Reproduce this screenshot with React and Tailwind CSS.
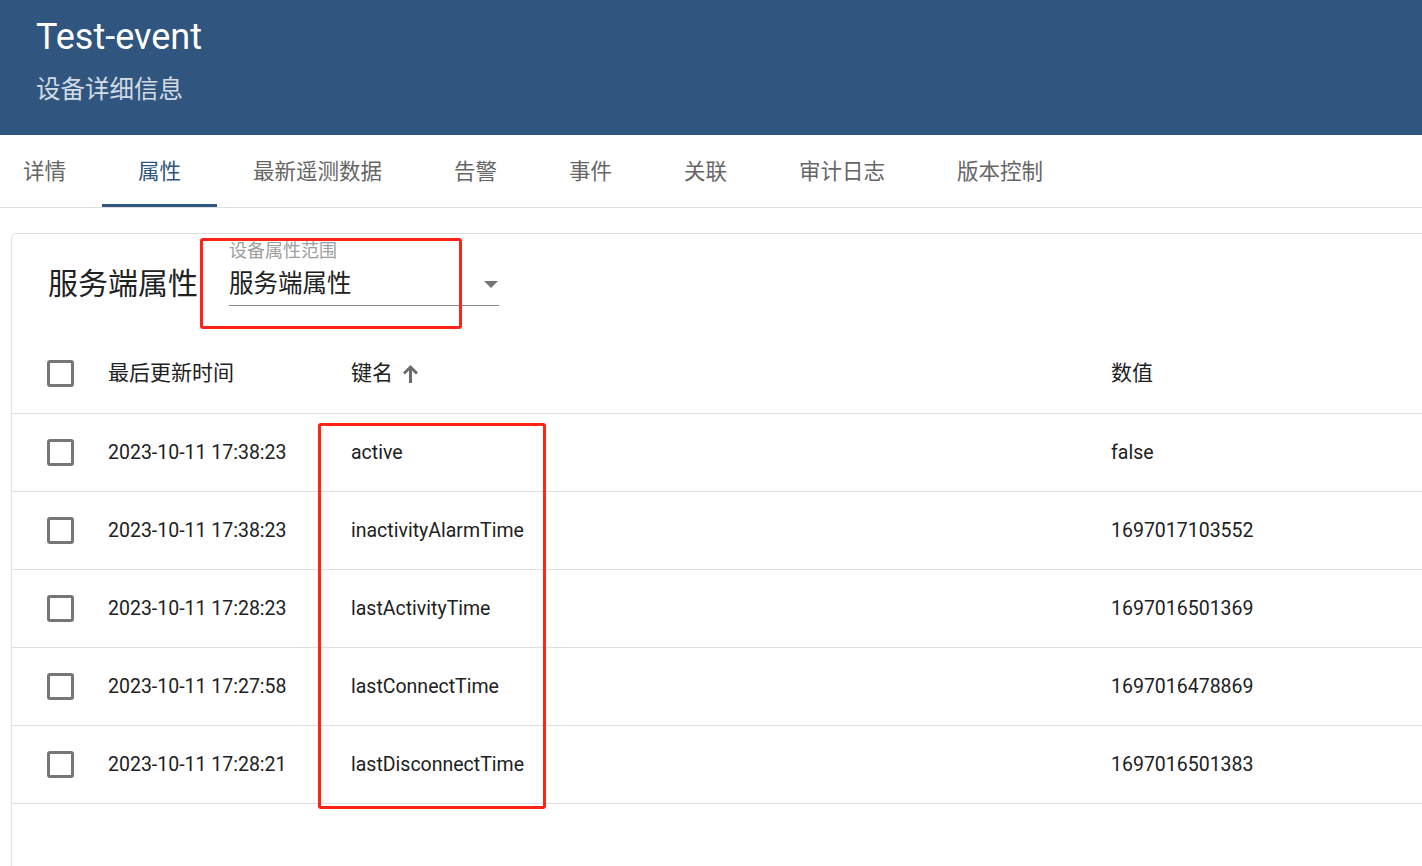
import { useState } from 'react';

const tabs = ['详情', '属性', '最新遥测数据', '告警', '事件', '关联', '审计日志', '版本控制'];

const rows = [
  { time: '2023-10-11 17:38:23', key: 'active', value: 'false' },
  { time: '2023-10-11 17:38:23', key: 'inactivityAlarmTime', value: '1697017103552' },
  { time: '2023-10-11 17:28:23', key: 'lastActivityTime', value: '1697016501369' },
  { time: '2023-10-11 17:27:58', key: 'lastConnectTime', value: '1697016478869' },
  { time: '2023-10-11 17:28:21', key: 'lastDisconnectTime', value: '1697016501383' },
];

function Checkbox() {
  return <div className="h-[27px] w-[27px] rounded-[3px] border-[3px] border-[#767676] bg-white" />;
}

function SortArrow() {
  return (
    <svg width="15" height="18" viewBox="0 0 15 18" className="ml-[10px] text-[#6b6b6b]">
      <path d="M7.5 0L15 7.5L13 9.5L9 5.5V18H6V5.5L2 9.5L0 7.5Z" fill="currentColor" />
    </svg>
  );
}

export default function App() {
  const [active, setActive] = useState(1);

  return (
    <div className="relative h-[866px] w-[1422px] overflow-hidden bg-white font-['Roboto','Noto_Sans_CJK_SC',sans-serif]">
      {/* page header */}
      <header className="h-[135px] bg-[#30557f] px-[36px]">
        <h1 className="pt-[17px] text-[36px] leading-[40px] text-white">Test-event</h1>
        <p className="mt-[17px] text-[24.5px] leading-[32px] text-[#d3dbe4]">设备详细信息</p>
      </header>

      {/* tabs */}
      <nav className="flex h-[73px] border-b border-[#e0e0e0] -ml-[13px]">
        {tabs.map((t, i) => (
          <button
            key={t}
            onClick={() => setActive(i)}
            className={
              'relative flex h-[72px] items-center px-[36px] pt-[3px] text-[21.5px] ' +
              (i === active ? 'text-[#30557f]' : 'text-[#666]')
            }
          >
            {t}
            {i === active && <span className="absolute bottom-0 left-0 h-[3px] w-full bg-[#30557f]" />}
          </button>
        ))}
      </nav>

      {/* card */}
      <section className="ml-[11px] -mr-4 mt-[25px] rounded-tl-[5px] border border-[#e0e0e0]">
        <div className="flex h-[100px] items-start pl-[36px]">
          <h2 className="mt-[32px] text-[30px] leading-[36px] text-[#212121]">服务端属性</h2>
          <div className="ml-[31px] w-[270px]">
            <div className="mt-[7px] text-[18px] leading-[20px] text-[#9e9e9e]">设备属性范围</div>
            <div className="mt-[8px] flex items-center justify-between border-b border-[#8a8a8a] pb-[6px]">
              <span className="text-[24.5px] leading-[30px] text-[#212121]">服务端属性</span>
              <span className="mr-[1px] h-0 w-0 border-x-[7px] border-t-[7px] border-x-transparent border-t-[#757575]" />
            </div>
          </div>
        </div>

        <div className="grid h-[80px] grid-cols-[61px_243px_760px_1fr] items-center border-b border-[#e0e0e0] pl-[35px] text-[21px] text-[#212121]">
          <Checkbox />
          <div>最后更新时间</div>
          <div className="flex items-center">
            键名
            <SortArrow />
          </div>
          <div>数值</div>
        </div>

        {rows.map((r) => (
          <div
            key={r.key}
            className="grid h-[78px] grid-cols-[61px_243px_760px_1fr] items-center border-b border-[#e0e0e0] pl-[35px] text-[19.5px] text-[#212121]"
          >
            <Checkbox />
            <div>{r.time}</div>
            <div>{r.key}</div>
            <div>{r.value}</div>
          </div>
        ))}
        <div className="h-[80px]" />
      </section>

      {/* annotation boxes */}
      <div className="absolute left-[200px] top-[238px] h-[91px] w-[262px] rounded-[3px] border-[3px] border-[#ff2318]" />
      <div className="absolute left-[318px] top-[423px] h-[386px] w-[228px] rounded-[3px] border-[3px] border-[#ff2318]" />
    </div>
  );
}
